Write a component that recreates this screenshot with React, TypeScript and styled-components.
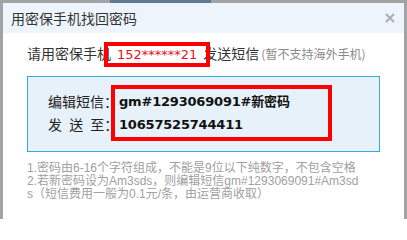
import styled, { createGlobalStyle } from "styled-components";

const GlobalStyle = createGlobalStyle`
  html, body {
    margin: 0;
    padding: 0;
  }
  body {
    font-family: "Noto Sans CJK SC", sans-serif;
  }
`;

const SPage = styled.div`
  height: 219px;
  box-sizing: border-box;
  padding: 3px 3px 0 3px;
  background: linear-gradient(#5d7a94, #5d7a94) 110px 0 / 101px 3px no-repeat,
    #a3a3a3;
  display: flex;
`;

const SDialog = styled.div`
  flex: 1;
  background: #ffffff;
  display: flex;
  flex-direction: column;
`;

const SHeader = styled.div`
  height: 30px;
  background: #eef4fc;
  display: flex;
  align-items: center;
  justify-content: space-between;
  padding: 0 9px 0 8px;
`;

const STitle = styled.span`
  font-size: 14px;
  color: #333333;
  line-height: 30px;
`;

const SClose = styled.svg`
  width: 10px;
  height: 10px;
  display: block;
`;

const SBody = styled.div`
  padding: 10px 24px 0 24px;
  display: flex;
  flex-direction: column;
`;

const SPhoneLine = styled.div`
  font-size: 14px;
  line-height: 20px;
  color: #333333;
  white-space: nowrap;
`;

const SPhone = styled.span`
  position: relative;
  display: inline-block;
  margin: 0 6px;
  font-family: "DejaVu Sans", sans-serif;
  font-size: 13px;
  color: #e4141b;
  line-height: 20px;

  &::after {
    content: "";
    position: absolute;
    left: -13px;
    right: -13px;
    top: -3px;
    bottom: -2px;
    border: 4px solid #ff0000;
    box-sizing: border-box;
  }
`;

const SHint = styled.span`
  font-size: 12px;
  color: #8a8a8a;
  margin-left: 2px;
`;

const SSmsBox = styled.div`
  margin-top: 11px;
  width: 353px;
  box-sizing: border-box;
  border: 1px solid #35a9e0;
  background: #e6f1f9;
  padding: 13px 0 15px 20px;
  display: flex;
`;

const SLabels = styled.div`
  display: flex;
  flex-direction: column;
`;

const SLabel = styled.div`
  width: 71px;
  font-size: 14px;
  line-height: 23px;
  color: #222222;
  word-spacing: 4px;
  white-space: pre;
`;

const SValues = styled.div`
  position: relative;
  display: flex;
  flex-direction: column;

  &::after {
    content: "";
    position: absolute;
    left: -8px;
    width: 221px;
    top: -5px;
    bottom: -5px;
    border: 4px solid #ff0000;
    box-sizing: border-box;
  }
`;

const SValue = styled.div`
  font-family: "DejaVu Sans", "Noto Sans CJK SC", sans-serif;
  font-weight: bold;
  font-size: 13px;
  letter-spacing: -0.2px;
  line-height: 23px;
  color: #111111;
  white-space: nowrap;
`;

const SNotes = styled.div`
  margin-top: 10px;
  font-family: "Liberation Sans", "Noto Sans CJK SC", sans-serif;
  font-size: 12px;
  line-height: 13px;
  color: #a0a0a0;
  white-space: nowrap;
`;

export default function App() {
  return (
    <>
      <GlobalStyle />
      <SPage>
        <SDialog>
          <SHeader>
            <STitle>用密保手机找回密码</STitle>
            <SClose viewBox="0 0 10 10">
              <path
                d="M1 1 L9 9 M9 1 L1 9"
                stroke="#adadad"
                strokeWidth="2"
                fill="none"
              />
            </SClose>
          </SHeader>
          <SBody>
            <SPhoneLine>
              请用密保手机<SPhone>152******21</SPhone>发送短信
              <SHint>(暂不支持海外手机)</SHint>
            </SPhoneLine>
            <SSmsBox>
              <SLabels>
                <SLabel>编辑短信：</SLabel>
                <SLabel>发 送 至：</SLabel>
              </SLabels>
              <SValues>
                <SValue>gm#1293069091#新密码</SValue>
                <SValue>10657525744411</SValue>
              </SValues>
            </SSmsBox>
            <SNotes>
              1.密码由6-16个字符组成，不能是9位以下纯数字，不包含空格
              <br />
              2.若新密码设为Am3sds，则编辑短信gm#1293069091#Am3sd
              <br />
              s（短信费用一般为0.1元/条，由运营商收取）
            </SNotes>
          </SBody>
        </SDialog>
      </SPage>
    </>
  );
}
